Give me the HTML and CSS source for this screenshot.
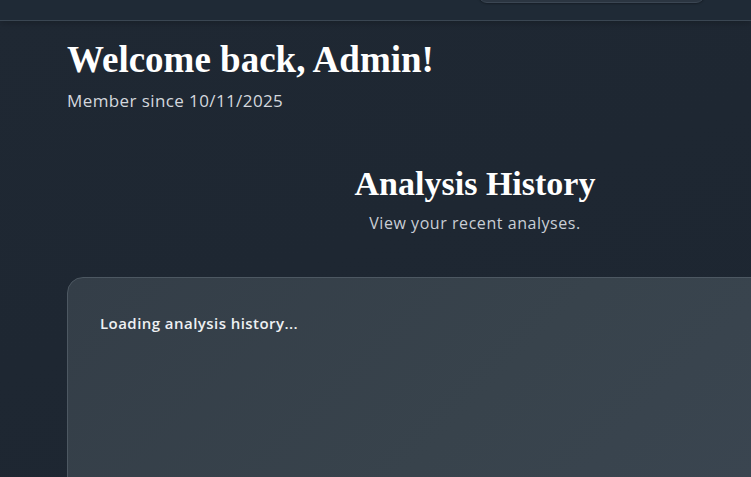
FILE: index.html
```html
<!DOCTYPE html>
<html lang="en">
<head>
<meta charset="utf-8">
<title>Dashboard</title>
<link rel="stylesheet" href="styles.css">
</head>
<body>
<header class="topbar">
  <div class="topbar-inner">
    <div class="search-pill"></div>
  </div>
</header>
<main class="page">
  <section class="welcome">
    <h1 class="welcome-title">Welcome back, Admin!</h1>
    <p class="welcome-sub">Member since 10/11/2025</p>
  </section>
  <section class="history">
    <div class="history-head">
      <h2 class="history-title">Analysis History</h2>
      <p class="history-sub">View your recent analyses.</p>
    </div>
    <div class="history-card">
      <p class="loading">Loading analysis history...</p>
    </div>
  </section>
</main>
</body>
</html>
```

FILE: styles.css
```css
* { box-sizing: border-box; }
html, body {
  margin: 0;
  padding: 0;
  width: 751px;
  height: 477px;
  overflow: hidden;
}
body {
  background: linear-gradient(160deg, #1f2833 0%, #1d2631 100%);
  font-family: "Open Sans", "DejaVu Sans", sans-serif;
  color: #f3f4f6;
}
.topbar {
  height: 21px;
  background: #1f2a36;
  border-bottom: 1px solid #3a4652;
  box-shadow: 0 3px 6px rgba(0, 0, 0, 0.18);
  position: relative;
  overflow: hidden;
}
.topbar-inner {
  display: flex;
  padding-left: 478px;
}
.search-pill {
  width: 227px;
  height: 40px;
  margin-top: -37px;
  border-radius: 9px;
  background: #2b3541;
  border: 1px solid #3b4653;
  box-shadow: 0 1px 2px rgba(0,0,0,0.3);
}
.page {
  padding-left: 67px;
  width: 883px;
}
.welcome {
  padding-top: 19px;
}
.welcome-title {
  margin: 0;
  font-family: "Liberation Serif", "DejaVu Serif", serif;
  font-weight: 700;
  font-size: 37px;
  line-height: 40px;
  color: #ffffff;
}
.welcome-sub {
  margin: 10px 0 0;
  font-size: 17px;
  line-height: 22px;
  letter-spacing: 0.4px;
  color: #d4d8de;
}
.history {
  width: 816px;
}
.history-head {
  display: flex;
  flex-direction: column;
  align-items: center;
  padding-top: 53px;
}
.history-title {
  margin: 0;
  font-family: "Liberation Serif", "DejaVu Serif", serif;
  font-weight: 700;
  font-size: 34px;
  line-height: 38px;
  color: #ffffff;
}
.history-sub {
  margin: 10px 0 0;
  font-size: 16px;
  line-height: 21px;
  letter-spacing: 0.55px;
  color: #c9ced6;
}
.history-card {
  margin-top: 43px;
  height: 260px;
  border: 1px solid #4d5862;
  border-radius: 16px;
  background: linear-gradient(135deg, #343e48 0%, #38434c 50%, #3b4652 100%);
  padding: 35px 32px;
}
.loading {
  margin: 0;
  font-size: 15px;
  line-height: 20px;
  font-weight: 600;
  letter-spacing: 0.45px;
  color: #eef0f3;
}
```
